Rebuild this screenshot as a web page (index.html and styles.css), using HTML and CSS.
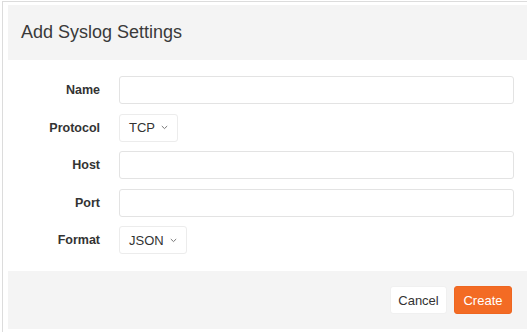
FILE: index.html
```html
<!DOCTYPE html>
<html>
<head>
<meta charset="utf-8">
<link rel="stylesheet" href="styles.css">
</head>
<body>
<div class="frame">
  <div class="modal">
    <div class="modal-header">
      <h1 class="modal-title">Add Syslog Settings</h1>
    </div>
    <form class="modal-body">
      <div class="row">
        <label class="label">Name</label>
        <input class="input" type="text">
      </div>
      <div class="row">
        <label class="label">Protocol</label>
        <div class="select">
          <span class="select-value">TCP</span>
          <svg class="chevron" width="7" height="5" viewBox="0 0 7 5"><path d="M0.8 1 L3.5 3.6 L6.2 1" fill="none" stroke="#777" stroke-width="1"/></svg>
        </div>
      </div>
      <div class="row">
        <label class="label">Host</label>
        <input class="input" type="text">
      </div>
      <div class="row">
        <label class="label">Port</label>
        <input class="input" type="text">
      </div>
      <div class="row">
        <label class="label">Format</label>
        <div class="select">
          <span class="select-value">JSON</span>
          <svg class="chevron" width="7" height="5" viewBox="0 0 7 5"><path d="M0.8 1 L3.5 3.6 L6.2 1" fill="none" stroke="#777" stroke-width="1"/></svg>
        </div>
      </div>
    </form>
    <div class="modal-footer">
      <button class="btn btn-default" type="button">Cancel</button>
      <button class="btn btn-primary" type="button">Create</button>
    </div>
  </div>
</div>
</body>
</html>
```

FILE: styles.css
```css
html, body {
  margin: 0;
  padding: 0;
  background: #fff;
}
body {
  font-family: "Liberation Sans", Arial, sans-serif;
  color: #333;
  width: 527px;
  height: 332px;
  overflow: hidden;
}
.frame {
  margin: 1px 0 0 2px;
  border-top: 1px solid #dcdcdc;
  border-left: 1px solid #dcdcdc;
  padding: 3px 0 0 5px;
  height: 331px;
  box-sizing: border-box;
}
.modal {
  display: flex;
  flex-direction: column;
}
.modal-header {
  background: #f4f4f4;
  height: 55px;
  display: flex;
  align-items: center;
  padding-left: 13px;
}
.modal-title {
  margin: 0;
  font-size: 18px;
  font-weight: normal;
  color: #3a3a3a;
}
.modal-body {
  margin: 0;
  padding: 16px 13px 17px 0;
  display: flex;
  flex-direction: column;
  gap: 9.5px;
}
.row {
  display: flex;
  align-items: center;
  height: 28px;
}
.label {
  width: 92px;
  flex: none;
  text-align: right;
  font-size: 12.5px;
  font-weight: bold;
  color: #333;
  margin-right: 19px;
}
.input {
  flex: 1;
  height: 28px;
  box-sizing: border-box;
  border: 1px solid #e3e3e3;
  border-radius: 3px;
  background: #fff;
  margin: 0;
  padding: 0 8px;
  font: inherit;
  outline: none;
}
.select {
  height: 28px;
  box-sizing: border-box;
  border: 1px solid #ececec;
  border-radius: 3px;
  background: #fff;
  display: flex;
  align-items: center;
  padding: 0 9px 0 9px;
  gap: 6px;
}
.select-value {
  font-size: 13px;
  color: #333;
}
.chevron {
  display: block;
}
.modal-footer {
  background: #f4f4f4;
  height: 58px;
  display: flex;
  align-items: center;
  justify-content: flex-end;
  gap: 7px;
  padding-right: 15px;
}
.btn {
  height: 28px;
  box-sizing: border-box;
  border-radius: 3px;
  font-family: inherit;
  font-size: 13px;
  padding: 0;
  margin: 0;
  cursor: pointer;
}
.btn-default {
  width: 57px;
  background: #fff;
  border: 1px solid #f0f0f0;
  color: #333;
}
.btn-primary {
  width: 58px;
  background: #f36b24;
  border: 1px solid #ee6620;
  color: #fff;
}
```
